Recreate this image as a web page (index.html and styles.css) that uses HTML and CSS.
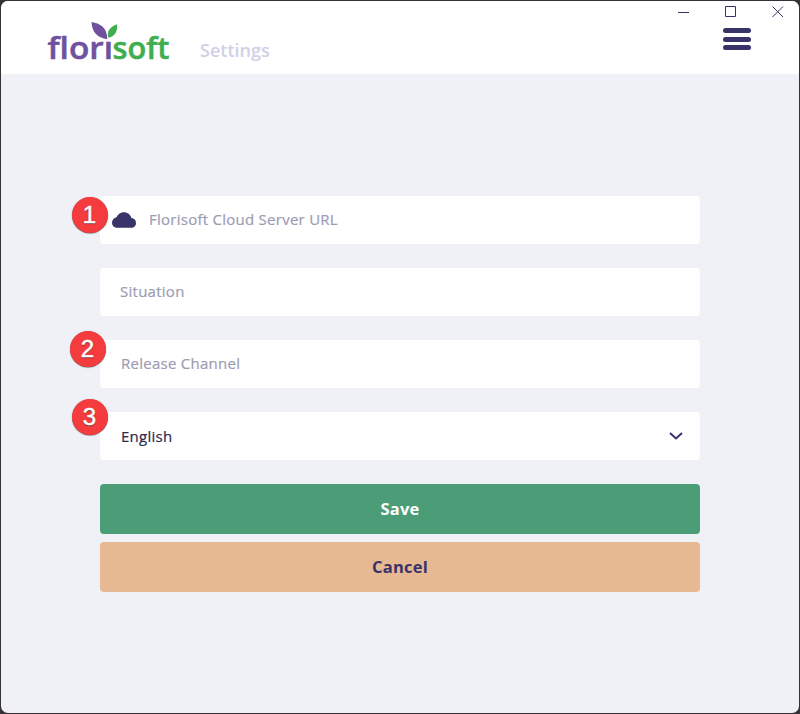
FILE: index.html
```html
<!DOCTYPE html>
<html lang="en">
<head>
<meta charset="utf-8">
<title>Florisoft Settings</title>
<link rel="stylesheet" href="styles.css">
</head>
<body>
<div class="window">
  <header class="header">
    <svg class="logo" width="130" height="50" viewBox="0 0 130 50" role="img" aria-label="florisoft">
      <text class="logo-flori" x="1.500" y="37.500" textLength="65.500" lengthAdjust="spacingAndGlyphs">florı</text>
      <text class="logo-soft" x="66.500" y="37.500" textLength="57" lengthAdjust="spacingAndGlyphs">soft</text>
      <path fill="#6f519f" d="M45.5 1C54 2.500 61 6 61.300 18.200C51 16.500 46 11 45.500 1Z"/>
      <path fill="#3fae4e" d="M71 3.200C64 6 60.500 10 62.300 16.800C69.500 15 71.800 10 71 3.200Z"/>
    </svg>
    <h1 class="title">Settings</h1>
    <div class="controls">
      <div class="caption">
        <svg width="12" height="12" viewBox="0 0 12 12"><path d="M0 6.500H11"/></svg>
        <svg width="12" height="12" viewBox="0 0 12 12"><path d="M.5.5H10.500V10.500H.5Z"/></svg>
        <svg width="12" height="12" viewBox="0 0 12 12"><path d="M.5.5L11 11M11 .5L.5 11"/></svg>
      </div>
      <div class="menu"><span></span><span></span><span></span></div>
    </div>
  </header>
  <main class="form">
    <div class="field with-icon">
      <span class="badge">1</span>
      <svg class="cloud" width="24" height="16" viewBox="0 0 24 16"><path fill="#383368" d="M5 15.700C2 15.700 0 13.500 0 10.700C0 8 1.800 5.700 4.500 5.200C6 1.800 8.800.2 12 .2C15.500.2 18.500 2.600 19.400 6C22.200 6.200 24 8.300 24 10.900C24 13.700 22 15.700 19.200 15.700Z"/></svg>
      <span class="placeholder">Florisoft Cloud Server URL</span>
    </div>
    <div class="field situation"><span class="placeholder">Situation</span></div>
    <div class="field">
      <span class="badge second">2</span>
      <span class="placeholder">Release Channel</span>
    </div>
    <div class="field select">
      <span class="badge third">3</span>
      <span>English</span>
      <svg class="chevron" width="14" height="8" viewBox="0 0 14 8"><path d="M1 1L7 6.500L13 1"/></svg>
    </div>
    <button class="button save">Save</button>
    <button class="button cancel">Cancel</button>
  </main>
</div>
</body>
</html>
```
FILE: styles.css
```css
* { box-sizing: border-box; }
body {
  margin: 0;
  height: 714px;
  padding: 1px;
  background: #343236;
  font-family: "Open Sans", "Noto Sans", sans-serif;
  color: #383368;
}
.window {
  height: 712px;
  border-radius: 7px;
  overflow: hidden;
  background: #f0f1f7;
}
.header {
  display: flex;
  height: 73px;
  background: #fff;
}
.logo { margin: 20px 0 0 45px; overflow: visible; }
.logo text {
  font-family: "Open Sans", sans-serif;
  font-size: 30px;
  font-weight: 600;
  font-variant-ligatures: none;
}
.logo .logo-flori { fill: #6f519f; stroke: #6f519f; stroke-width: .5; }
.logo .logo-soft { fill: #3fae4e; stroke: #3fae4e; stroke-width: .5; }
.title {
  margin: 37px 0 0 24px;
  font-size: 18px;
  line-height: 25px;
  font-weight: 600;
  color: #d0d0e6;
}
.controls { margin-left: auto; padding: 5px 15px 0 0; }
.caption { display: flex; gap: 35px; }
.caption svg { display: block; }
.caption path {
  fill: none;
  stroke: #383368;
  stroke-width: 1;
}
.menu {
  display: flex;
  flex-direction: column;
  gap: 3.5px;
  width: 28px;
  margin: 10px 0 0 45px;
}
.menu span {
  height: 5px;
  border-radius: 3px;
  background: #383368;
}
.form {
  display: flex;
  flex-direction: column;
  width: 600px;
  margin: 122px 0 0 99px;
}
.field {
  position: relative;
  display: flex;
  align-items: center;
  height: 48px;
  margin-bottom: 24px;
  padding: 0 17px 2px 21px;
  border-radius: 4px;
  background: #fff;
  font-size: 15px;
  letter-spacing: .26px;
  -webkit-text-stroke: .2px;
}
.with-icon { padding-left: 12px; }
.cloud { margin: 2px 13px 0 0; }
.situation { padding-left: 20px; }
.placeholder { color: #9c9bb3; }
.select { padding-bottom: 0; color: #2d294e; }
.chevron { margin-left: auto; }
.chevron path {
  fill: none;
  stroke: #383368;
  stroke-width: 2;
}
.badge {
  position: absolute;
  left: -28.5px;
  top: 1px;
  width: 36px;
  height: 36px;
  border-radius: 50%;
  background: #f43b3d;
  box-shadow: 0 .5px 1px #555;
  color: #fff;
  font: 24px/36px "Liberation Sans", sans-serif;
  letter-spacing: 0;
  text-align: center;
  text-shadow: 0 1px 1px #622;
  -webkit-text-stroke: .5px #fff;
}
.badge.second { left: -30.5px; top: -9px; }
.badge.third { top: -13px; }
.button {
  height: 50px;
  margin-bottom: 8px;
  padding: 0;
  border: 0;
  border-radius: 4px;
  font: 700 16.500px/50px "Open Sans", sans-serif;
  letter-spacing: .2px;
}
.save { background: #4b9d78; color: #fff; }
.cancel { background: #e7b993; color: #383368; }
```
